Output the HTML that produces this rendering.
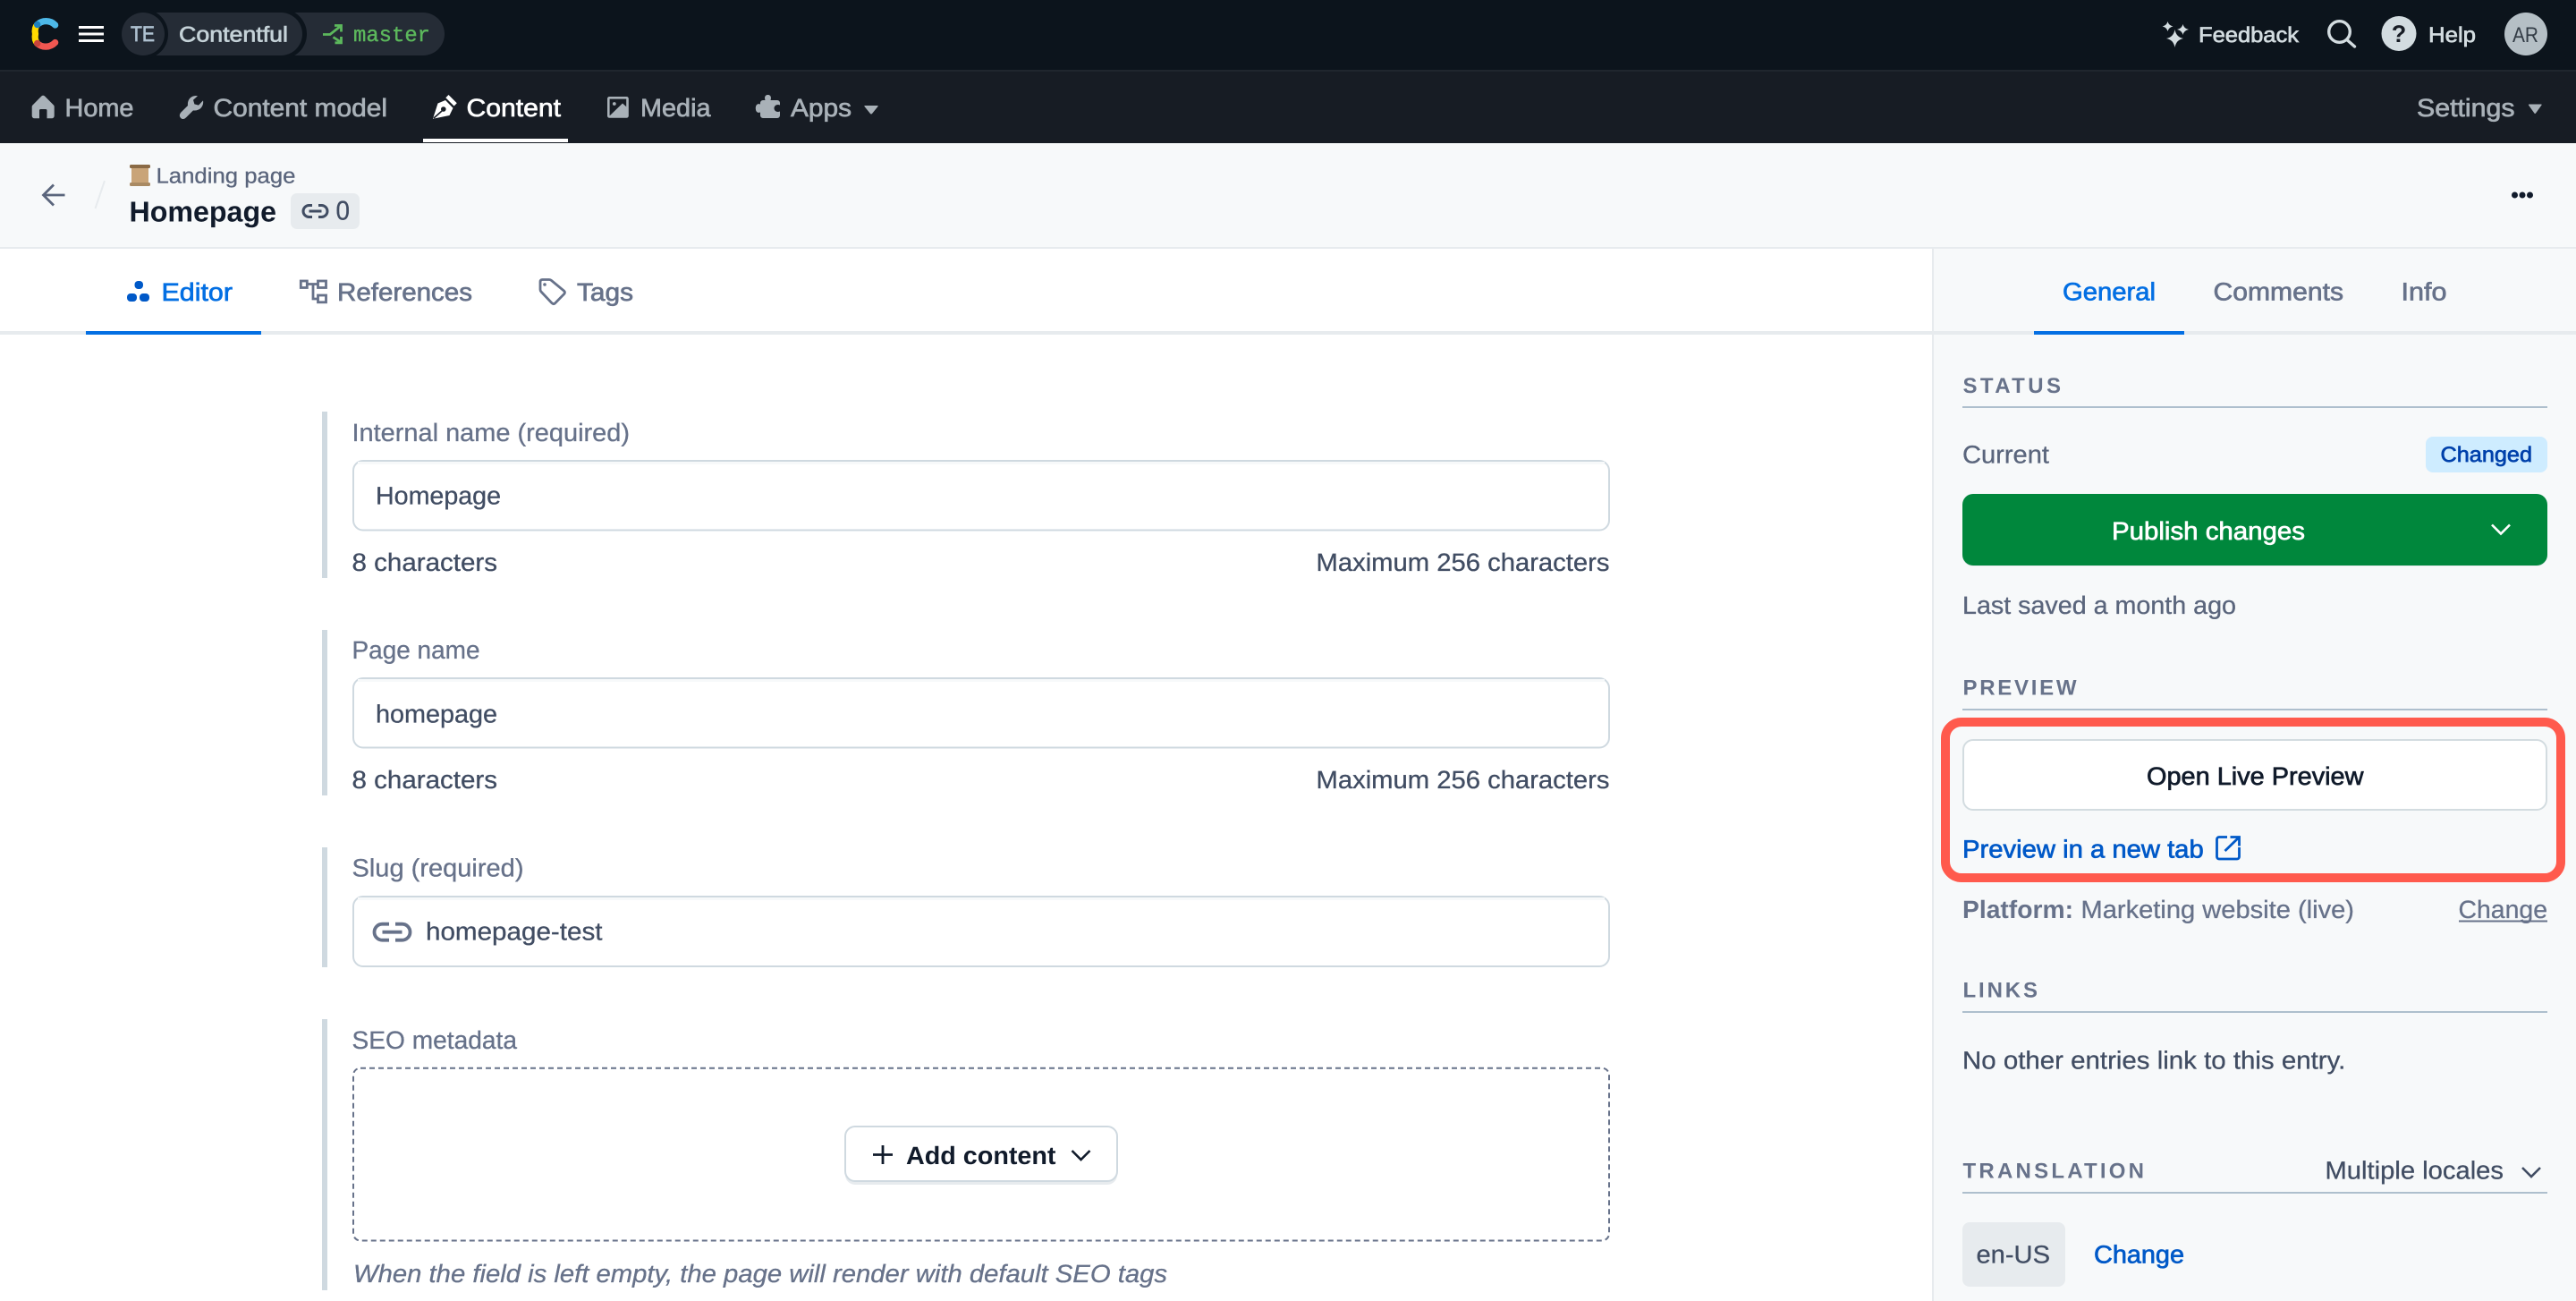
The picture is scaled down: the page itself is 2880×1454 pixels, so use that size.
<!DOCTYPE html>
<html lang="en"><head><meta charset="utf-8"><title>Homepage</title>
<style>
html,body{margin:0;padding:0;background:#fff;width:2880px;height:1454px;overflow:hidden}
svg{display:block}
text{font-family:"Liberation Sans",Arial,sans-serif;font-size:28px;text-rendering:geometricPrecision}
.m{stroke:currentColor;stroke-width:.7px}
.r{stroke:currentColor;stroke-width:.3px}
.b{font-weight:700}
.s{font-size:24px}
.nav{fill:#a9b1b8;color:#a9b1b8}
.lab{fill:#67728a;color:#67728a}
.val{fill:#414d63;color:#414d63}
.mut{fill:#5a657c;color:#5a657c}
.sec{font-size:24px;font-weight:700;fill:#67728a}
</style></head><body>
<svg xmlns="http://www.w3.org/2000/svg" width="2880" height="1454" viewBox="0 0 2880 1454">
<rect width="2880" height="1454" fill="#fff"/>
<!-- top bar -->
<rect width="2880" height="78" fill="#0c141c"/>
<rect y="78" width="2880" height="2" fill="#20262e"/>
<rect y="80" width="2880" height="80" fill="#171c24"/>
<!-- logo -->
<g fill="none" stroke-width="7.2" stroke-linecap="round">
<path d="M39.5 38 C38.5 33 39.5 30 41.7 27.5 M41.7 48.5 C39.5 46 38.5 43 39.5 38" stroke="#ffda00"/>
<path d="M41.7 27.5 C47 22.5 56 22 61.7 28" stroke="#4db8e8"/>
<path d="M41.7 48.5 C47 53.5 56 53.5 61.7 47.5" stroke="#f05751"/>
</g>
<circle cx="41.7" cy="27.5" r="3.7" fill="#1b7fbe"/><circle cx="41.7" cy="48.5" r="3.7" fill="#c8443c"/>
<!-- hamburger -->
<g fill="#fff"><rect x="88" y="29" width="28" height="3"/><rect x="88" y="36.5" width="28" height="3"/><rect x="88" y="44" width="28" height="3"/></g>
<!-- pill -->
<rect x="136" y="14" width="361" height="48" rx="24" fill="#252c36"/>
<rect x="150" y="10" width="193" height="56" rx="28" fill="#0c141c"/>
<rect x="150" y="14" width="188" height="48" rx="24" fill="#252c36"/>
<circle cx="160" cy="38" r="28" fill="#0c141c"/>
<circle cx="160" cy="38" r="24" fill="#252c36"/>
<text x="146" y="46" class="s m" fill="#aec1d0" color="#aec1d0" textLength="27" lengthAdjust="spacingAndGlyphs">TE</text>
<text x="200" y="46.5" class="s m" fill="#c5d2d8" color="#c5d2d8" textLength="122" lengthAdjust="spacingAndGlyphs">Contentful</text>
<g fill="none" stroke="#5cb85c" stroke-width="2.8">
<path d="M361 38.5 H369 L381 29 M374 28.5 H381.5 V35.5"/><path d="M372.5 41.5 L381 47 M374.5 47.8 H381.5 V41"/>
</g>
<text x="395" y="46" style="font-family:'Liberation Mono',monospace;font-size:24px;stroke:#5cb85c;stroke-width:.4px" fill="#5cb85c" textLength="86" lengthAdjust="spacingAndGlyphs">master</text>
<!-- top right -->
<g fill="#d3dce0">
<path d="M2431.5 33 Q2433 41.5 2441 43 Q2433 44.5 2431.5 53 Q2430 44.5 2422 43 Q2430 41.5 2431.5 33Z"/>
<path d="M2423.5 24 Q2424.6 28.4 2429.5 29.5 Q2424.6 30.6 2423.5 35 Q2422.4 30.6 2417.6 29.5 Q2422.4 28.4 2423.5 24Z"/>
<path d="M2440.5 27 Q2441.6 31.9 2447 33 Q2441.6 34.1 2440.5 39 Q2439.4 34.1 2434 33 Q2439.4 31.9 2440.5 27Z"/>
</g>
<text x="2458" y="47" class="s m" fill="#d3dce0" color="#d3dce0" textLength="112" lengthAdjust="spacingAndGlyphs">Feedback</text>
<g fill="none" stroke="#d3dce0" stroke-width="3.4" stroke-linecap="round"><circle cx="2615.5" cy="35.5" r="11.8"/><path d="M2624.5 45 L2632.5 52"/></g>
<circle cx="2682" cy="37.5" r="19.5" fill="#d3dce0"/>
<text x="2682" y="47" text-anchor="middle" class="b" style="font-size:27px" fill="#171c24">?</text>
<text x="2715" y="47" class="s m" fill="#d3dce0" color="#d3dce0" textLength="53" lengthAdjust="spacingAndGlyphs">Help</text>
<circle cx="2824" cy="38" r="24" fill="#b5bfc5"/>
<text x="2809" y="47" class="s" fill="#333c46" textLength="29" lengthAdjust="spacingAndGlyphs">AR</text>
<!-- nav -->
<path d="M48.2 106.7 C49 106.7 49.6 107 50.2 107.6 L60 117.5 C60.5 118 60.7 118.6 60.7 119.3 V129.5 A2.8 2.8 0 0 1 57.9 132.3 H52.5 V123.5 A1.5 1.5 0 0 0 51 122 H45.5 A1.5 1.5 0 0 0 44 123.5 V132.3 H38.5 A2.8 2.8 0 0 1 35.7 129.5 V119.3 C35.7 118.6 36 118 36.5 117.5 L46.2 107.6 C46.8 107 47.4 106.7 48.2 106.7Z" fill="#a9b1b8"/>
<text x="72.5" y="130" class="nav m" textLength="77" lengthAdjust="spacingAndGlyphs">Home</text>
<path d="M219 107 C213 107 209.2 112 210 118 L202.2 125.8 C200.4 127.8 200.4 130.4 202.2 132 C204 133.6 206.2 133.2 208 131.4 L216 123.4 C222.4 124.2 227.2 120 227.2 114 L227 112.4 L222 117.6 L217.4 116.4 L216 111.8 L221 107.2Z" fill="#a9b1b8"/>
<text x="238.5" y="130" class="nav m" textLength="194.5" lengthAdjust="spacingAndGlyphs">Content model</text>
<!-- pen -->
<path d="M484 132.7 L489.5 115.5 L498 112 L506.5 120.8 L502.5 129 Z" fill="#fff"/>
<path d="M501.5 106 L510.8 115.3 L507.6 118.5 L498.3 109.2Z" fill="#fff"/>
<circle cx="495.8" cy="122" r="2.8" fill="#171c24"/>
<path d="M485 132 L494 124" stroke="#171c24" stroke-width="1.6"/>
<text x="521.5" y="130" class="m" fill="#fff" color="#fff" textLength="105.5" lengthAdjust="spacingAndGlyphs">Content</text>
<rect x="473" y="155" width="162" height="4" fill="#fff"/>
<!-- media -->
<rect x="680.3" y="109.3" width="21.2" height="21.2" rx="1" fill="none" stroke="#a9b1b8" stroke-width="2.6"/>
<path d="M681.5 129.5 L696 115.5 L700.5 119.5 V129.5Z" fill="#a9b1b8"/>
<circle cx="686.8" cy="116" r="1.9" fill="#a9b1b8"/>
<text x="716" y="130" class="nav m" textLength="78.5" lengthAdjust="spacingAndGlyphs">Media</text>
<!-- apps -->
<path d="M853 112 H855.5 C854 107.5 856.5 106 858.5 106 C860.5 106 863 107.5 861.5 112 H869 A3 3 0 0 1 872 115 V117.5 C868 116 865.5 118.5 865.5 121 C865.5 123.5 868 126 872 124.5 V129 A3 3 0 0 1 869 132 H853 A3 3 0 0 1 850 129 V125.5 C846 127 844.8 123.5 844.8 121 C844.8 118.5 846 115 850 116.5 V115 A3 3 0 0 1 853 112Z" fill="#a9b1b8"/>
<text x="884" y="130" class="nav m" textLength="68" lengthAdjust="spacingAndGlyphs">Apps</text>
<path d="M967 118 H981 Q982 118 981.5 119 L975 127 Q974 128 973 127 L966.5 119 Q966 118 967 118Z" fill="#a9b1b8"/>
<text x="2702" y="130" class="nav m" textLength="109.5" lengthAdjust="spacingAndGlyphs">Settings</text>
<path d="M2827.5 116.5 H2841 Q2842 116.5 2841.5 117.5 L2835 126.5 Q2834.2 127.5 2833.4 126.5 L2827 117.5 Q2826.6 116.5 2827.5 116.5Z" fill="#a9b1b8"/>
<!-- header -->
<rect y="160" width="2880" height="116" fill="#f7f9fa"/>
<rect y="276" width="2880" height="2" fill="#e7ebee"/>
<path d="M72.5 218 H49.5 M60 206.5 L48.5 218 L60 229.5" fill="none" stroke="#5a657c" stroke-width="2.8"/>
<path d="M117 202 L106.5 233" stroke="#e7ebee" stroke-width="2"/>
<rect x="147" y="186" width="19" height="20" fill="#c9a478"/>
<rect x="145" y="184" width="23" height="4" rx="1.5" fill="#8a6a45"/>
<rect x="145" y="204" width="23" height="4" rx="1.5" fill="#a98a63"/>
<text x="174.5" y="204.7" class="s r mut" textLength="156" lengthAdjust="spacingAndGlyphs">Landing page</text>
<text x="144.5" y="247.5" class="b" style="font-size:32px" fill="#111b2b" textLength="164.5" lengthAdjust="spacingAndGlyphs">Homepage</text>
<rect x="325" y="216" width="77" height="40" rx="7" fill="#e7ebee"/>
<path d="M349 229.5 H345.5 A6.5 6.5 0 0 0 345.5 242.5 H349 M356 229.5 H359.5 A6.5 6.5 0 0 1 359.5 242.5 H356 M345.5 236 H359.5" fill="none" stroke="#414d63" stroke-width="3"/>
<text x="375.5" y="245.5" class="val r" style="font-size:30px" textLength="15.5" lengthAdjust="spacingAndGlyphs">0</text>
<g fill="#111b2b"><circle cx="2811.5" cy="218" r="3.5"/><circle cx="2820" cy="218" r="3.5"/><circle cx="2828.5" cy="218" r="3.5"/></g>
<!-- sidebar -->
<rect x="2160" y="278" width="720" height="1176" fill="#f7f9fa"/>
<rect x="2160" y="278" width="2" height="1176" fill="#e7ebee"/>
<!-- tabs -->
<rect y="370" width="2880" height="4" fill="#e7ebee"/>
<rect x="96" y="370" width="196" height="4" fill="#036fe3"/>
<rect x="2274" y="370" width="168" height="4" fill="#036fe3"/>
<g fill="#0059c8"><rect x="150.5" y="314" width="9.5" height="9" rx="4"/><rect x="142" y="328" width="11" height="9" rx="4"/><rect x="156" y="328" width="11" height="9" rx="4"/></g>
<text x="180.5" y="336" class="m" fill="#036fe3" color="#036fe3" textLength="79.5" lengthAdjust="spacingAndGlyphs">Editor</text>
<g fill="none" stroke="#67728a" stroke-width="2.8"><rect x="336.3" y="314" width="7" height="7.5"/><rect x="355.5" y="314" width="9" height="7.5"/><rect x="355.5" y="330" width="9" height="7.8"/><path d="M343.3 317.5 H355.5 M350 317.5 V334 H355.5"/></g>
<text x="377" y="336" class="lab m" textLength="151" lengthAdjust="spacingAndGlyphs">References</text>
<path d="M606.5 312.5 H614 Q615.5 312.5 616.5 313.5 L630.5 325 Q632.2 326.8 630.8 328.5 L620.5 339 Q618.5 340.5 616.8 338.5 L605 326 Q604 325 604 323.5 V315 Q604 312.5 606.5 312.5Z" fill="none" stroke="#67728a" stroke-width="2.8"/>
<circle cx="609" cy="318" r="1.8" fill="#67728a"/>
<text x="645" y="336" class="lab m" textLength="63" lengthAdjust="spacingAndGlyphs">Tags</text>
<text x="2306" y="335.5" class="m" fill="#036fe3" color="#036fe3" textLength="104" lengthAdjust="spacingAndGlyphs">General</text>
<text x="2474.5" y="335.5" class="lab m" textLength="145.5" lengthAdjust="spacingAndGlyphs">Comments</text>
<text x="2684.5" y="335.5" class="lab m" textLength="51" lengthAdjust="spacingAndGlyphs">Info</text>
<!-- fields -->
<g fill="#cfd9e0"><rect x="360" y="460" width="6" height="186"/><rect x="360" y="704" width="6" height="185"/><rect x="360" y="947" width="6" height="134"/><rect x="360" y="1139" width="6" height="303"/></g>
<text x="393.5" y="493" class="lab r" textLength="310.5" lengthAdjust="spacingAndGlyphs">Internal name (required)</text>
<rect x="395" y="515" width="1404" height="77.5" rx="11" fill="#fff" stroke="#cfd9e0" stroke-width="2"/><rect x="400" y="516" width="1394" height="3" fill="#f7f9fa"/>
<text x="420" y="563.5" class="val r" textLength="140" lengthAdjust="spacingAndGlyphs">Homepage</text>
<text x="393.5" y="638" class="val r" textLength="162.5" lengthAdjust="spacingAndGlyphs">8 characters</text>
<text x="1471.5" y="638" class="val r" textLength="328" lengthAdjust="spacingAndGlyphs">Maximum 256 characters</text>

<text x="393.5" y="736" class="lab r" textLength="143" lengthAdjust="spacingAndGlyphs">Page name</text>
<rect x="395" y="758" width="1404" height="77.5" rx="11" fill="#fff" stroke="#cfd9e0" stroke-width="2"/><rect x="400" y="759" width="1394" height="3" fill="#f7f9fa"/>
<text x="420" y="807.5" class="val r" textLength="136" lengthAdjust="spacingAndGlyphs">homepage</text>
<text x="393.5" y="881" class="val r" textLength="162.5" lengthAdjust="spacingAndGlyphs">8 characters</text>
<text x="1471.5" y="881" class="val r" textLength="328" lengthAdjust="spacingAndGlyphs">Maximum 256 characters</text>

<text x="393.5" y="979.5" class="lab r" textLength="192" lengthAdjust="spacingAndGlyphs">Slug (required)</text>
<rect x="395" y="1002" width="1404" height="78" rx="11" fill="#fff" stroke="#cfd9e0" stroke-width="2"/><rect x="400" y="1003" width="1394" height="3" fill="#f7f9fa"/>
<path d="M435 1032.7 H427.5 A9 9 0 0 0 427.5 1050.7 H435 M442 1032.7 H449.5 A9 9 0 0 1 449.5 1050.7 H442 M427.5 1041.7 H449.5" fill="none" stroke="#67728a" stroke-width="3.8"/>
<text x="476" y="1050.5" class="val r" textLength="197.5" lengthAdjust="spacingAndGlyphs">homepage-test</text>

<text x="393.5" y="1172" class="lab r" textLength="184.5" lengthAdjust="spacingAndGlyphs">SEO metadata</text>
<rect x="395" y="1193.7" width="1404" height="192.8" rx="8" fill="#fff" stroke="#67728a" stroke-width="2" stroke-dasharray="6 4"/>
<rect x="945" y="1262" width="304" height="62" rx="11" fill="#e7ebee"/>
<rect x="945" y="1259" width="304" height="61" rx="11" fill="#fff" stroke="#cfd9e0" stroke-width="2"/>
<path d="M987 1280 V1301 M976 1290.5 H998" stroke="#111b2b" stroke-width="2.8" fill="none"/>
<text x="1013" y="1301" class="b" fill="#111b2b" textLength="167.5" lengthAdjust="spacingAndGlyphs">Add content</text>
<path d="M1198.5 1286 L1208.5 1296 L1218.5 1286" fill="none" stroke="#111b2b" stroke-width="2.6"/>
<text x="395" y="1433" font-style="italic" class="lab r" textLength="910" lengthAdjust="spacingAndGlyphs">When the field is left empty, the page will render with default SEO tags</text>
<!-- sidebar content -->
<text x="2194.5" y="439" class="sec" textLength="109.5">STATUS</text>
<rect x="2194" y="454" width="654" height="2" fill="#aebfcd"/>
<text x="2194" y="517.5" class="mut r" textLength="97" lengthAdjust="spacingAndGlyphs">Current</text>
<rect x="2712" y="488" width="136" height="40" rx="8" fill="#ceecff"/>
<text x="2728.5" y="516" class="s m" fill="#0041ab" color="#0041ab" textLength="102.5" lengthAdjust="spacingAndGlyphs">Changed</text>
<rect x="2194" y="553" width="654" height="80" rx="12" fill="#e7ebee"/>
<rect x="2194" y="552" width="654" height="80" rx="12" fill="#00873c"/>
<text x="2361" y="603" class="m" fill="#fff" color="#fff" textLength="216" lengthAdjust="spacingAndGlyphs">Publish changes</text>
<path d="M2786 586.5 L2796 596.5 L2806 586.5" fill="none" stroke="#fff" stroke-width="2.6"/>
<text x="2194" y="686" class="mut r" textLength="306" lengthAdjust="spacingAndGlyphs">Last saved a month ago</text>

<text x="2194.5" y="776.7" class="sec" textLength="127">PREVIEW</text>
<rect x="2194" y="792" width="654" height="2" fill="#aebfcd"/>
<rect x="2195" y="827" width="652" height="78" rx="11" fill="#fff" stroke="#d3dce0" stroke-width="2"/>
<text x="2400" y="877" class="m" fill="#111b2b" color="#111b2b" textLength="242.5" lengthAdjust="spacingAndGlyphs">Open Live Preview</text>
<text x="2194" y="958.5" class="m" fill="#0059c8" color="#0059c8" textLength="269.7" lengthAdjust="spacingAndGlyphs">Preview in a new tab</text>
<path d="M2490 935.5 H2481 A2.5 2.5 0 0 0 2478.5 938 V957.5 A2.5 2.5 0 0 0 2481 960 H2501 A2.5 2.5 0 0 0 2503.5 957.5 V947 M2487.5 951 L2503 936 M2493.5 935.5 H2503.5 V945.5" fill="none" stroke="#0059c8" stroke-width="2.8"/>
<rect x="2175" y="807" width="688" height="174" rx="18" fill="none" stroke="#ff5a4d" stroke-width="10"/>
<text x="2194" y="1026" class="b" fill="#67728a" textLength="124" lengthAdjust="spacingAndGlyphs">Platform:</text>
<text x="2326.5" y="1026" class="lab r" textLength="305.5" lengthAdjust="spacingAndGlyphs">Marketing website (live)</text>
<text x="2748.5" y="1026" class="lab r" textLength="99.5" lengthAdjust="spacingAndGlyphs">Change</text>
<rect x="2749" y="1028.5" width="99" height="2" fill="#67728a"/>

<text x="2194.5" y="1114.7" class="sec" textLength="83.5">LINKS</text>
<rect x="2194" y="1130" width="654" height="2" fill="#aebfcd"/>
<text x="2194" y="1194.5" class="val r" textLength="428.3" lengthAdjust="spacingAndGlyphs">No other entries link to this entry.</text>

<text x="2194.5" y="1316.7" class="sec" textLength="202.5">TRANSLATION</text>
<rect x="2194" y="1332" width="654" height="2" fill="#aebfcd"/>
<text x="2599.5" y="1317.5" class="val r" textLength="199.5" lengthAdjust="spacingAndGlyphs">Multiple locales</text>
<path d="M2820 1305 L2830 1315 L2840 1305" fill="none" stroke="#414d63" stroke-width="2.6"/>
<rect x="2194" y="1366" width="115" height="72" rx="8" fill="#e7ebee"/>
<text x="2209.5" y="1411.5" class="val r" textLength="82.5" lengthAdjust="spacingAndGlyphs">en-US</text>
<text x="2341" y="1411.5" class="m" fill="#0059c8" color="#0059c8" textLength="101" lengthAdjust="spacingAndGlyphs">Change</text>
</svg>
</body></html>
